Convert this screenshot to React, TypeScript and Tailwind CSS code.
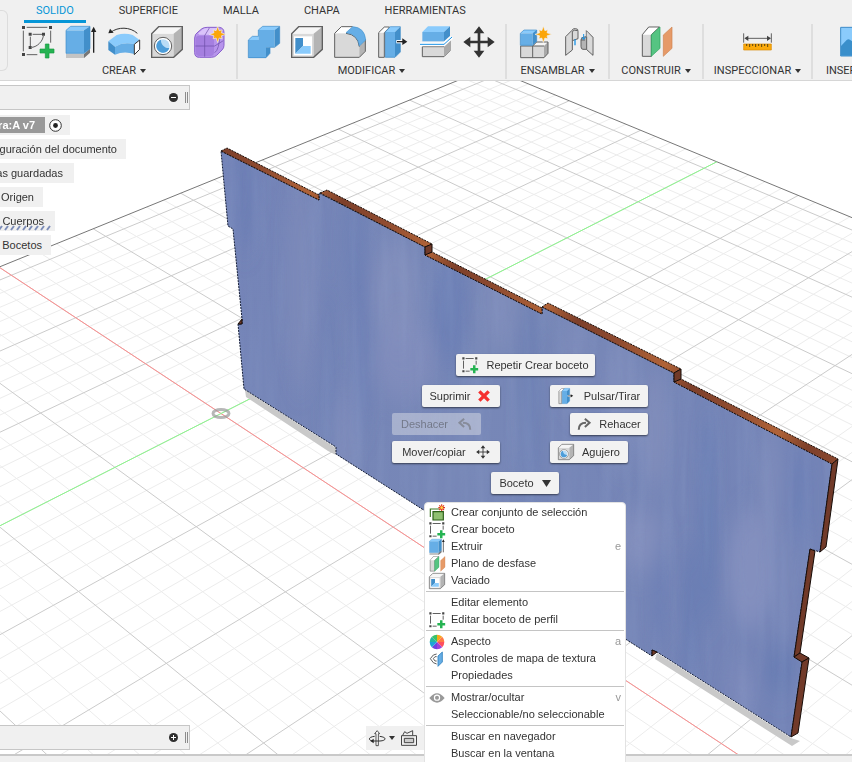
import type { ReactNode } from "react";
import clsx from "clsx";

type IconProps = { className?: string };

const BLUE = "#66aee6";
const BLUE_LIGHT = "#8acbfc";
const BLUE_DARK = "#428fca";
const STEEL = "#d9d9d9";
const STEEL_LIGHT = "#f6f6f6";
const STEEL_DARK = "#b4b4b4";
const EDGE = "#606060";

function Icon({ className = "size-8", children }: IconProps & { children: ReactNode }) {
  return (
    <svg viewBox="0 0 96 96" className={clsx("shrink-0 overflow-visible", className)} fill="none" aria-hidden="true">
      {children}
    </svg>
  );
}

/* ---------- toolbar icons, drawn on a 96 unit grid ---------- */

function Star({ x, y }: { x: number; y: number }) {
  const points = Array.from({ length: 16 }, (_, k) => {
    const r = k % 2 ? 12 : k % 4 ? 19 : 25;
    const a = (k * Math.PI) / 8;
    return `${x + r * Math.sin(a)},${y - r * Math.cos(a)}`;
  }).join(" ");
  return <polygon points={points} fill="#fba60a" stroke="#f0f0f0" strokeWidth="2" />;
}

function SketchIcon({ className }: IconProps) {
  return (
    <Icon className={className}>
      <path d="M14 4H76M4 14V76M86 14V50M14 86H46" stroke={EDGE} strokeWidth="3" />
      <path d="M0 0h9v9H0zM81 0h9v9h-9zM0 81h9v9H0z" fill="#444" />
      <path d="M25 32V60M32 25H60M64 30C62 46 46 62 30 64" stroke={EDGE} strokeWidth="3" />
      <path d="M20 20h9v9h-9zM60 20h9v9h-9zM20 60h9v9h-9z" fill="#444" />
      <path d="M70 54h11v15h15v12H81v15H70V81H54V69h16z" fill="#25b352" stroke="#159a40" strokeWidth="2" />
    </Icon>
  );
}

function SketchSmallIcon({ className }: IconProps) {
  return (
    <Icon className={className}>
      <path d="M22 9H70M9 22V70M85 22V46M22 85H46" stroke={EDGE} strokeWidth="6" />
      <path d="M2 2h13v13H2zM79 2h13v13H79zM2 79h13v13H2z" fill="#444" />
      <path d="M66 50h15v16h16v15H81v16H66V81H50V66h16z" fill="#25b352" />
    </Icon>
  );
}

function ExtrudeIcon({ className }: IconProps) {
  return (
    <Icon className={className}>
      <path d="M3 84H57L75 68V80L57 96H3z" fill="#c4c4c4" />
      <path d="M57 84L75 68V80L57 96z" fill="#777" />
      <path d="M3 13H57V82H3z" fill={BLUE} />
      <path d="M3 13L17 1H75L57 13z" fill={BLUE_LIGHT} />
      <path d="M57 13L75 1V68L57 82z" fill={BLUE_DARK} />
      <path d="M3 13L17 1H75V68L57 82H3z" stroke="#3c8bc8" strokeWidth="2" />
      <path d="M86 80V12" stroke="#222" strokeWidth="4" />
      <path d="M78 18L86 2L94 18z" fill="#222" />
    </Icon>
  );
}

function RevolveIcon() {
  return (
    <Icon>
      <path d="M8 19C30 2 66 2 88 22" stroke="#333" strokeWidth="3" />
      <path d="M1 22L6 8L17 20z" fill="#222" />
      <path d="M1 46L26 27Q50 20 74 27L95 42L79 55Q48 46 21 62z" fill={BLUE_LIGHT} />
      <path d="M1 46L21 62V86L1 72z" fill={BLUE_DARK} />
      <path d="M21 62Q48 46 79 55V84Q48 74 21 86z" fill={BLUE} />
      <path d="M79 55L95 42V70L79 86z" fill="#fff" stroke="#333" strokeWidth="3" />
    </Icon>
  );
}

function SteelBox() {
  return (
    <>
      <path d="M2 23H68V94H2z" fill={STEEL} />
      <path d="M2 23L23 2H94L68 23z" fill={STEEL_LIGHT} />
      <path d="M68 23L94 2V70L68 94z" fill={STEEL_DARK} />
      <path d="M2 23L23 2H94V70L68 94H2z" stroke={EDGE} strokeWidth="4" />
    </>
  );
}

function HoleIcon({ className }: IconProps) {
  return (
    <Icon className={className}>
      <SteelBox />
      <circle cx="36" cy="60" r="26" fill="#fff" stroke={EDGE} strokeWidth="3" />
      <circle cx="36" cy="60" r="20" fill="#b9dcf6" />
      <path d="M30 41C28 54 42 68 55 66A20 20 0 1 1 30 41z" fill="#4d9dd9" />
    </Icon>
  );
}

function FormIcon() {
  return (
    <Icon>
      <path d="M2 36Q2 24 12 18L24 8Q30 4 40 4H76Q90 6 90 20V58Q90 66 84 72L68 88Q62 94 52 94H16Q2 94 2 80z" fill="#b794ec" stroke="#8a62cc" strokeWidth="3" />
      <path d="M12 22L26 10Q32 6 42 6H70L62 22Q60 26 52 26H16z" fill="#d9c3fa" />
      <path d="M5 40Q5 29 16 29H50Q60 29 60 40V78Q60 90 50 90H16Q5 90 5 78z" fill="#a57fe0" />
      <path d="M32 29V92M4 60H62L88 44M60 36L84 14M62 80Q76 72 78 22M32 29L46 6" stroke="#6b4ba6" strokeWidth="2" />
      <Star x={71} y={25} />
    </Icon>
  );
}

function CombineIcon() {
  return (
    <Icon>
      <path d="M31 12H80V64H54V96H1V42H31z" fill={BLUE} />
      <path d="M31 12L44 1H95L80 12zM1 42L13 31H31V42z" fill={BLUE_LIGHT} />
      <path d="M80 12L95 1V52L80 64zM54 64H66V82L54 95z" fill={BLUE_DARK} />
      <path d="M31 12L44 1H95V52L80 64H66V82L54 95H1V42L13 31H31z" stroke="#3c8bc8" strokeWidth="2" />
    </Icon>
  );
}

function ShellIcon({ className }: IconProps) {
  return (
    <Icon className={className}>
      <SteelBox />
      <path d="M9 31H63V88H9z" fill="#fff" />
      <path d="M13 36H36V60L13 83z" fill={BLUE_DARK} />
      <path d="M36 60H59V83H13z" fill={BLUE_LIGHT} />
    </Icon>
  );
}

function FilletIcon() {
  return (
    <Icon>
      <path d="M2 22H36Q72 26 76 62V94H2z" fill={STEEL} />
      <path d="M2 22L22 2H56L36 22z" fill="#fff" />
      <path d="M76 60L94 40V76L76 94z" fill={STEEL_DARK} />
      <path d="M36 22Q72 26 76 62M2 22L22 2H56M94 40V76L76 94H2V22" stroke={EDGE} strokeWidth="3" />
      <path d="M36 20L56 2Q92 4 95 42L76 60Q72 24 36 20z" fill={BLUE} stroke="#4394d0" strokeWidth="2" />
    </Icon>
  );
}

function PressPullIcon({ className }: IconProps) {
  return (
    <Icon className={className}>
      <path d="M5 20L22 3H38L22 20V94H5z" fill={STEEL} stroke={EDGE} strokeWidth="3" />
      <path d="M7 20L23 5H34L20 20z" fill="#fff" />
      <path d="M25 18H54V94H25z" fill={BLUE} />
      <path d="M25 18L40 2H70L54 18z" fill={BLUE_LIGHT} />
      <path d="M54 18L70 2V78L54 94z" fill={BLUE_DARK} />
      <path d="M25 18L40 2H70V78L54 94H25z" stroke="#3c8bc8" strokeWidth="2" />
      <path d="M58 47H80" stroke="#fff" strokeWidth="10" />
      <path d="M60 47H82" stroke="#222" strokeWidth="4" />
      <path d="M76 37L91 47L76 57z" fill="#222" />
    </Icon>
  );
}

function SplitIcon() {
  return (
    <Icon>
      <path d="M7 62H72L90 44V74L72 92H7z" fill={STEEL} stroke={EDGE} strokeWidth="3" />
      <path d="M72 62L90 44V74L72 92z" fill="#aaa" />
      <path d="M7 18H72V46H7z" fill={BLUE} />
      <path d="M7 18L24 1H90L72 18z" fill={BLUE_LIGHT} />
      <path d="M72 18L90 1V30L72 46z" fill={BLUE_DARK} />
      <path d="M0 55H72L96 33" stroke="#fff" strokeWidth="11" />
      <path d="M0 55H72L96 33" stroke="#1b93e6" strokeWidth="3" />
    </Icon>
  );
}

function MoveIcon({ className, thin }: IconProps & { thin?: boolean }) {
  return (
    <Icon className={className}>
      <path d="M48 14V82M14 48H82" stroke="#333" strokeWidth={thin ? 6 : 8} />
      <path d="M48 1L64 22H32zM48 95L64 74H32zM1 48L22 32V64zM95 48L74 32V64z" fill="#333" />
    </Icon>
  );
}

function NewComponentIcon() {
  return (
    <Icon>
      <path d="M2 60H37V95H2zM38 60H72V95H38z" fill={STEEL} />
      <path d="M38 60L50 48H84L72 60z" fill={STEEL_LIGHT} />
      <path d="M72 60L84 48V82L72 95z" fill="#a8a8a8" />
      <path d="M2 60V95H72L84 82V48H50L38 60V95M2 60H72" stroke={EDGE} strokeWidth="3" />
      <path d="M1 22L12 12H52L46 22z" fill={BLUE_LIGHT} />
      <path d="M1 22H38V58H1z" fill={BLUE} />
      <path d="M38 22L50 12V46L38 58z" fill={BLUE_DARK} />
      <path d="M1 22L12 12H50V46L38 58H1z" stroke="#3c8bc8" strokeWidth="2" />
      <Star x={70} y={25} />
    </Icon>
  );
}

function JointIcon() {
  return (
    <Icon>
      <path d="M8 32L26 14Q30 6 38 8Q46 8 45 16V38L28 44V72L8 88z" fill={STEEL} stroke={EDGE} strokeWidth="3" />
      <path d="M28 44V16M28 16Q34 10 44 14" stroke={EDGE} strokeWidth="3" />
      <path d="M36 40V58" stroke="#1b93e6" strokeWidth="4" />
      <path d="M70 14L90 34V88L70 70H60Q54 70 54 62V42Q54 36 60 34L70 32z" fill={STEEL_DARK} stroke={EDGE} strokeWidth="3" />
      <path d="M71 16V68L88 84V35z" fill={STEEL} />
      <path d="M71 32V70M54 42H66" stroke={EDGE} strokeWidth="3" />
      <path d="M62 24V40M56 34L62 40L68 34" stroke="#1b93e6" strokeWidth="3" />
    </Icon>
  );
}

function PlaneIcon({ className }: IconProps) {
  return (
    <Icon className={className}>
      <path d="M7 26L26 3H58L34 26V91H7z" fill={STEEL} stroke={EDGE} strokeWidth="3" />
      <path d="M9 26L27 5H54L32 26z" fill="#fff" />
      <path d="M34 27L60 3V67L34 91z" fill="#55c482" stroke="#27a35a" strokeWidth="2" />
      <path d="M70 27L96 3V67L70 91z" fill="#e69a68" stroke="#cf8350" strokeWidth="2" />
    </Icon>
  );
}

function MeasureIcon() {
  return (
    <Icon>
      <path d="M5 22V50M88 22V50M12 37H82" stroke={EDGE} strokeWidth="3" />
      <path d="M7 37L19 29V45zM87 37L75 29V45z" fill="#444" />
      <path d="M5 54H88V72H5z" fill="#fbaa0c" stroke="#d98a00" strokeWidth="2" />
      <path d="M14 54v6M23 54v9M32 54v6M41 54v9M50 54v6M59 54v9M68 54v6M77 54v9" stroke="#5c4410" strokeWidth="3" />
    </Icon>
  );
}

function InsertImageIcon() {
  return (
    <Icon>
      <path d="M2 4H94V90H2z" fill={BLUE_LIGHT} stroke="#3c8bc8" strokeWidth="3" />
      <path d="M3 60L20 42Q26 36 34 44L60 70L94 50V89H3z" fill="#3a8fcb" />
    </Icon>
  );
}

/* ---------- menu icons ---------- */

function SelectionSetIcon({ className }: IconProps) {
  return (
    <Icon className={className}>
      <path d="M8 72V24H64" stroke="#3c7a22" strokeWidth="7" />
      <path d="M24 40H86V90H24z" fill="#8fbf70" stroke="#2c5f18" strokeWidth="7" />
      <path d="M76 -4V36M56 16H96M62 2L90 30M90 2L62 30" stroke="#e23a1c" strokeWidth="7" />
      <circle cx="76" cy="16" r="8" fill="#ffd84a" />
    </Icon>
  );
}

const WHEEL = ["#f7a81b", "#ff7a45", "#ff4f5e", "#a13fd8", "#6f42e0", "#1ea5d8", "#27b8a0", "#3cc267"];

function AppearanceIcon({ className }: IconProps) {
  return (
    <Icon className={className}>
      {WHEEL.map((fill, k) => {
        const a = (k * Math.PI) / 4;
        const b = ((k + 1) * Math.PI) / 4;
        const d = `M48 48L${48 + 44 * Math.sin(a)} ${48 - 44 * Math.cos(a)}A44 44 0 0 1 ${48 + 44 * Math.sin(b)} ${48 - 44 * Math.cos(b)}z`;
        return <path key={fill} d={d} fill={fill} />;
      })}
    </Icon>
  );
}

function TextureMapIcon({ className }: IconProps) {
  return (
    <Icon className={className}>
      <path d="M46 18L26 24L8 46L26 70L46 78M46 34H36L26 46L36 60H46" stroke={EDGE} strokeWidth="6" />
      <path d="M54 30L80 6V66L54 92z" fill={BLUE} stroke="#2f7fbd" strokeWidth="5" />
    </Icon>
  );
}

function EyeIcon({ className }: IconProps) {
  return (
    <Icon className={className}>
      <path d="M2 48Q48 -8 94 48Q48 104 2 48z" fill="#999" />
      <circle cx="48" cy="46" r="19" fill="#fff" />
      <circle cx="48" cy="46" r="12" fill="#999" />
    </Icon>
  );
}

function DeleteIcon({ className }: IconProps) {
  return (
    <Icon className={className}>
      <path d="M20 20L76 76M76 20L20 76" stroke="#f5302e" strokeWidth="20" />
    </Icon>
  );
}

function TurnIcon({ className, flip }: IconProps & { flip?: boolean }) {
  return (
    <Icon className={className}>
      <g transform={flip ? "translate(96 0) scale(-1 1)" : undefined}>
        <path d="M12 88C12 56 30 40 62 40" stroke="#666" strokeWidth="14" />
        <path d="M54 12L86 40L54 68" stroke="#666" strokeWidth="14" />
      </g>
    </Icon>
  );
}

function OrbitIcon() {
  return (
    <Icon className="size-4">
      <path d="M42 94V22H34L49 4L64 22H56V94z" fill="#fff" stroke="#333" strokeWidth="5" />
      <path d="M34 38C-6 42 -6 62 22 66M64 38C110 44 104 64 66 66H22" stroke="#333" strokeWidth="6" />
      <path d="M8 66L28 52V80z" fill="#222" />
    </Icon>
  );
}

function LookAtIcon() {
  return (
    <Icon className="size-4">
      <path d="M3 34H93V92H3z" stroke="#444" strokeWidth="6" />
      <path d="M20 50H76V76H20z" fill="#ccc" stroke="#444" strokeWidth="6" />
      <path d="M10 32L22 10L36 20L70 4V32" stroke="#444" strokeWidth="6" />
    </Icon>
  );
}

function Caret() {
  return (
    <svg viewBox="0 0 6 4" className="h-1 w-1.5 shrink-0" aria-hidden="true">
      <path d="M0 0H6L3 4z" fill="#333" />
    </svg>
  );
}

/* ---------- ribbon ---------- */

const TABS = ["SOLIDO", "SUPERFICIE", "MALLA", "CHAPA", "HERRAMIENTAS"];

const GROUPS = [
  {
    label: "CREAR",
    className: "w-[230px] pl-1",
    tools: [
      { name: "Crear boceto", icon: <SketchIcon /> },
      { name: "Extruir", icon: <ExtrudeIcon /> },
      { name: "Revolución", icon: <RevolveIcon /> },
      { name: "Agujero", icon: <HoleIcon /> },
      { name: "Crear forma", icon: <FormIcon /> },
    ],
  },
  {
    label: "MODIFICAR",
    className: "w-[269px]",
    tools: [
      { name: "Combinar", icon: <CombineIcon /> },
      { name: "Vaciado", icon: <ShellIcon /> },
      { name: "Empalme", icon: <FilletIcon /> },
      { name: "Pulsar/Tirar", icon: <PressPullIcon /> },
      { name: "Dividir cuerpo", icon: <SplitIcon /> },
      { name: "Mover/copiar", icon: <MoveIcon /> },
    ],
  },
  {
    label: "ENSAMBLAR",
    className: "w-[103px]",
    tools: [
      { name: "Nuevo componente", icon: <NewComponentIcon /> },
      { name: "Unión", icon: <JointIcon /> },
    ],
  },
  { label: "CONSTRUIR", className: "w-[94px]", tools: [{ name: "Plano de desfase", icon: <PlaneIcon /> }] },
  { label: "INSPECCIONAR", className: "w-[109px]", tools: [{ name: "Medir", icon: <MeasureIcon /> }] },
  { label: "INSERTAR", className: "w-[88px]", tools: [{ name: "Insertar imagen", icon: <InsertImageIcon /> }] },
];

function Ribbon() {
  return (
    <header className="flex h-[81px] shrink-0 overflow-hidden border-b border-[#d6d6d6] bg-[#f0f0f0] font-['Roboto','Liberation_Sans',sans-serif] text-[11px] text-[#333]">
      <div className="mt-[10px] h-[61px] w-2 shrink-0 rounded-r-md border border-l-0 border-[#dcdcdc]" />
      <div className="min-w-0 flex-1">
        <nav className="flex h-6 gap-[21px] pl-4">
          {TABS.map((tab, idx) => (
            <button
              key={tab}
              type="button"
              className={clsx(
                "h-[23px] border-b-[3px] px-3 pt-px leading-5",
                idx === 0 ? "border-[#0696d7] text-[#0696d7]" : "border-transparent"
              )}
            >
              {tab}
            </button>
          ))}
        </nav>
        <div className="flex">
          {GROUPS.map((group) => (
            <section
              key={group.label}
              className={clsx("flex shrink-0 flex-col items-center border-r-2 border-[#dedede] pt-0.5", group.className)}
            >
              <div className="flex">
                {group.tools.map((tool) => (
                  <button key={tool.name} type="button" aria-label={tool.name} className="flex w-[43px] justify-center">
                    {tool.icon}
                  </button>
                ))}
              </div>
              <button type="button" className="mt-[5px] flex h-4 items-center gap-1 leading-4">
                {group.label}
                <Caret />
              </button>
            </section>
          ))}
        </div>
      </div>
    </header>
  );
}

/* ---------- 3D view ---------- */

// Projects a point of the ground plane (in major grid cells) onto the view.
function project(i: number, j: number) {
  const w = 1 - 0.0425 * i + 0.0433 * j;
  return [(69.4 * i + 111 * j + 221) / w, (34.4 * i - 33.6 * j + 413.5) / w];
}

function segment(i1: number, j1: number, i2: number, j2: number) {
  const [x1, y1] = project(i1, j1);
  const [x2, y2] = project(i2, j2);
  return `M${x1.toFixed(1)} ${y1.toFixed(1)}L${x2.toFixed(1)} ${y2.toFixed(1)}`;
}

const I_MIN = -16;
const I_MAX = 45;
const J_MIN = -35;
const J_MAX = 31;

function gridLines(major: boolean) {
  let d = "";
  for (let i = I_MIN + 1; i <= I_MAX; i++) {
    if ((i % 5 === 0) === major) d += segment(i / 5, J_MIN / 5, i / 5, J_MAX / 5);
  }
  for (let j = J_MIN; j < J_MAX; j++) {
    if ((j % 5 === 0) === major) d += segment(I_MIN / 5, j / 5, I_MAX / 5, j / 5);
  }
  return d;
}

const FACE =
  "M221 151L319 200V193L425 247V255L542 314V307L674 373V382L832 464L820 552L810 549L794 657L802 662L791 737L657 652L652 650V656L336 454V447L244 389L238 324H242V319L233 229L228 226z";

const EDGES = [
  "M221 151L227 148L319 195V200z",
  "M320 193L327 190L432 244L425 247z",
  "M425 255L432 252L542 308V314z",
  "M542 307L548 303L681 369L674 373z",
  "M674 382L681 379L838 459L832 464z",
];

const SIDES = [
  "M425 247L432 244V252L425 255z",
  "M674 373L681 369V379L674 382z",
  "M832 464L838 459L826 547L820 552z",
  "M810 549L815 551L800 653L794 657z",
  "M794 657L800 653L809 658L802 662z",
  "M802 662L809 658L798 733L791 737z",
  "M652 650L657 652L652 656z",
  "M238 324L242 319V324z",
];

// x, y, half width, half height, fill, opacity
const STREAKS: [number, number, number, number, string, number][] = [
  [245, 190, 14, 60, "#6379b2", 0.4],
  [300, 280, 16, 110, "#8a93bf", 0.25],
  [330, 400, 7, 120, "#6076b0", 0.3],
  [355, 240, 12, 60, "#6a7db3", 0.4],
  [362, 350, 9, 90, "#5f77b2", 0.3],
  [395, 290, 24, 50, "#929ac4", 0.35],
  [405, 360, 30, 40, "#8e97c2", 0.4],
  [345, 440, 10, 50, "#8d96c1", 0.3],
  [450, 310, 18, 60, "#5f78b3", 0.4],
  [500, 300, 20, 50, "#8b94c0", 0.35],
  [530, 400, 12, 110, "#6178b2", 0.35],
  [575, 360, 16, 50, "#8a93bf", 0.35],
  [620, 400, 18, 70, "#8b94c0", 0.3],
  [655, 430, 14, 60, "#929ac4", 0.35],
  [640, 540, 26, 30, "#929ac4", 0.45],
  [708, 520, 8, 110, "#5a76b1", 0.45],
  [690, 610, 8, 70, "#5873b0", 0.4],
  [750, 570, 22, 60, "#979ec7", 0.45],
  [770, 480, 14, 60, "#8b94c0", 0.35],
  [785, 580, 12, 60, "#7f8bbb", 0.4],
  [780, 670, 16, 24, "#5a74b0", 0.45],
  [660, 590, 7, 60, "#657ab3", 0.4],
  [800, 500, 12, 50, "#6279b4", 0.35],
  [740, 690, 16, 30, "#8a93bf", 0.3],
];

function Scene() {
  return (
    <svg
      viewBox="0 81 852 673"
      preserveAspectRatio="xMidYMid slice"
      className="absolute inset-0 size-full"
      role="img"
      aria-label="Vista 3D del panel"
    >
      <defs>
        <linearGradient id="wood" gradientUnits="userSpaceOnUse" x1="221" y1="150" x2="338" y2="210" spreadMethod="repeat">
          <stop offset="0" stopColor="#7d3f2a" />
          <stop offset="0.35" stopColor="#8f4b30" />
          <stop offset="0.75" stopColor="#b06338" />
          <stop offset="1" stopColor="#7d3f2a" />
        </linearGradient>
        <linearGradient id="shade" x1="0" x2="1" y1="0" y2="0.3">
          <stop offset="0" stopColor="#7484b8" />
          <stop offset="0.5" stopColor="#7787b7" />
          <stop offset="1" stopColor="#7484b7" />
        </linearGradient>
        <filter id="soft" x="-50%" y="-50%" width="200%" height="200%">
          <feGaussianBlur stdDeviation="7 14" />
        </filter>
        <filter id="grain" x="0" y="0" width="100%" height="100%">
          <feTurbulence type="fractalNoise" baseFrequency="0.08 0.006" numOctaves="3" seed="4" />
          <feColorMatrix values="0 0 0 0 0.33  0 0 0 0 0.42  0 0 0 0 0.67  0 1.6 0 0 -0.6" />
        </filter>
        <clipPath id="face">
          <path d={FACE} />
        </clipPath>
      </defs>

      <rect x="0" y="81" width="852" height="673" fill="#fff" />
      <path d={gridLines(false)} stroke="#ececec" fill="none" />
      <path d={gridLines(true)} stroke="#cbcbcb" fill="none" />
      <path
        d={segment(I_MIN / 5, J_MIN / 5, I_MIN / 5, J_MAX / 5) + segment(I_MIN / 5, J_MAX / 5, I_MAX / 5, J_MAX / 5)}
        stroke="#777"
        fill="none"
      />
      <path d={segment(I_MIN / 5, 0, I_MAX / 5, 0)} stroke="#ff8f8f" fill="none" />
      <path d={segment(0, J_MIN / 5, 0, J_MAX / 5)} stroke="#8cfa8c" fill="none" />
      <ellipse cx="221" cy="413.5" rx="8" ry="4" fill="none" stroke="#999" strokeOpacity="0.7" strokeWidth="3" />

      <path d="M245 390L336 448V455L328 451L246 397zM657 653L791 738L800 741L792 746L655 659z" fill="#c9c9c9" />

      <path d={FACE} fill="url(#shade)" />
      <g clipPath="url(#face)">
        <g filter="url(#soft)">
          {STREAKS.map(([x, y, rx, ry, fill, opacity]) => (
            <ellipse key={`${x}-${y}`} cx={x} cy={y} rx={rx} ry={ry} fill={fill} opacity={opacity} />
          ))}
        </g>
        <rect x="220" y="140" width="620" height="600" filter="url(#grain)" opacity="0.2" />
      </g>
      <path d={FACE} fill="none" stroke="#111a33" strokeDasharray="2 1" />
      {EDGES.map((d) => (
        <path key={d} d={d} fill="url(#wood)" stroke="#150b07" strokeDasharray="2 1" strokeLinejoin="round" />
      ))}
      {SIDES.map((d) => (
        <path key={d} d={d} fill="#713a29" stroke="#150b07" strokeLinejoin="round" />
      ))}
    </svg>
  );
}

/* ---------- browser panel ---------- */

const NODES = [
  { label: "figuración del documento", className: "w-[126px] pr-[9px]" },
  { label: "as guardadas", className: "w-[74px] pr-[11px]" },
  { label: "Origen", className: "w-[43px] pr-[9px]" },
  { label: "Cuerpos", className: "w-[55px] pr-[11px]", hatched: true },
  { label: "Bocetos", className: "w-[51px] pr-[9px]" },
];

function PanelBar({ sign }: { sign: "plus" | "minus" }) {
  return (
    <div className="flex h-[25px] w-[190px] items-center justify-end gap-[7px] border border-l-0 border-[#c6c6c6] bg-[#f0f0f0] pr-px">
      <button type="button" aria-label={sign === "plus" ? "Expandir" : "Contraer"}>
        <svg viewBox="0 0 9 9" className="size-[9px]">
          <circle cx="4.5" cy="4.5" r="4.5" fill="#2f2f2f" />
          <path d={sign === "plus" ? "M2 4.5H7M4.5 2V7" : "M2 4.5H7"} stroke="#fff" />
        </svg>
      </button>
      <span className="h-[11px] w-[3px] border-x border-[#8c8c8c]" />
    </div>
  );
}

function BrowserPanel() {
  return (
    <aside className="relative flex flex-1 flex-col items-start pt-1">
      <PanelBar sign="minus" />
      <ul className="mt-[5px] flex flex-col items-start gap-1 leading-5">
        <li className="flex h-5 w-[70px] items-center gap-1 bg-[#f0f0f0]">
          <span className="flex h-4 w-[45px] justify-end bg-[#999] pr-[10px] leading-4 font-bold whitespace-nowrap text-white">
            ra:A v7
          </span>
          <label className="relative flex">
            <input type="radio" defaultChecked aria-label="Activar componente" className="peer absolute inset-0 opacity-0" />
            <svg viewBox="0 0 13 13" className="size-[13px]" aria-hidden="true">
              <circle cx="6.5" cy="6.5" r="5.8" fill="#fff" stroke="#333" />
              <circle cx="6.5" cy="6.5" r="2.4" fill="#222" />
            </svg>
          </label>
        </li>
        {NODES.map((node) => (
          <li key={node.label} className={clsx("relative flex h-5 justify-end bg-[#f0f0f0] whitespace-nowrap", node.className)}>
            {node.label}
            {node.hatched && (
              <svg className="absolute bottom-0 left-0 h-1.5 w-[51px]" aria-hidden="true">
                <path
                  d={Array.from({ length: 9 }, (_, k) => `M${k * 6 - 1} 5l3 -4`).join("")}
                  stroke="#7d8db8"
                  strokeWidth="2"
                />
              </svg>
            )}
          </li>
        ))}
      </ul>
      <div className="mt-auto mb-1">
        <PanelBar sign="plus" />
      </div>
    </aside>
  );
}

/* ---------- marking menu ---------- */

function MarkingButton({ className, disabled, children }: IconProps & { disabled?: boolean; children: ReactNode }) {
  return (
    <button
      type="button"
      disabled={disabled}
      className={clsx(
        "absolute flex h-[22px] items-center justify-center whitespace-nowrap rounded-xs",
        disabled ? "bg-[#f0f0f0]/40 text-[#333]/45" : "bg-[#f2f2f2] shadow-[0_1px_2px_rgba(0,0,0,0.55)]",
        className
      )}
    >
      {children}
    </button>
  );
}

function MarkingMenu() {
  return (
    <div>
      <MarkingButton className="top-[273px] left-[456px] w-[139px] gap-2">
        <SketchSmallIcon className="size-4" />
        Repetir Crear boceto
      </MarkingButton>
      <MarkingButton className="top-[304px] left-[422px] w-[78px] gap-1.5">
        Suprimir
        <DeleteIcon className="size-4" />
      </MarkingButton>
      <MarkingButton className="top-[304px] left-[550px] w-[98px] gap-2.5">
        <PressPullIcon className="size-4" />
        Pulsar/Tirar
      </MarkingButton>
      <MarkingButton className="top-[332px] left-[392px] w-[89px] gap-2.5" disabled>
        Deshacer
        <TurnIcon flip className="size-3.5 opacity-50" />
      </MarkingButton>
      <MarkingButton className="top-[332px] left-[570px] w-[78px] gap-2">
        <TurnIcon className="size-3.5" />
        Rehacer
      </MarkingButton>
      <MarkingButton className="top-[360px] left-[392px] w-[108px] gap-2.5">
        Mover/copiar
        <MoveIcon thin className="size-3.5" />
      </MarkingButton>
      <MarkingButton className="top-[360px] left-[550px] w-[78px] gap-2">
        <HoleIcon className="size-4" />
        Agujero
      </MarkingButton>
      <MarkingButton className="top-[391px] left-[491px] w-[68px] gap-2">
        Boceto
        <svg viewBox="0 0 9 7" className="h-[7px] w-[9px]" aria-hidden="true">
          <path d="M0 0H9L4.5 7z" fill="#333" />
        </svg>
      </MarkingButton>
    </div>
  );
}

type MenuEntry = { label: string; icon?: ReactNode; shortcut?: string };

const MENU: MenuEntry[][] = [
  [
    { label: "Crear conjunto de selección", icon: <SelectionSetIcon className="size-4" /> },
    { label: "Crear boceto", icon: <SketchSmallIcon className="size-4" /> },
    { label: "Extruir", icon: <ExtrudeIcon className="size-4" />, shortcut: "e" },
    { label: "Plano de desfase", icon: <PlaneIcon className="size-4" /> },
    { label: "Vaciado", icon: <ShellIcon className="size-4" /> },
  ],
  [{ label: "Editar elemento" }, { label: "Editar boceto de perfil", icon: <SketchSmallIcon className="size-4" /> }],
  [
    { label: "Aspecto", icon: <AppearanceIcon className="size-4" />, shortcut: "a" },
    { label: "Controles de mapa de textura", icon: <TextureMapIcon className="size-4" /> },
    { label: "Propiedades" },
  ],
  [
    { label: "Mostrar/ocultar", icon: <EyeIcon className="size-4" />, shortcut: "v" },
    { label: "Seleccionable/no seleccionable" },
  ],
  [{ label: "Buscar en navegador" }, { label: "Buscar en la ventana" }],
];

function ContextMenu() {
  return (
    <div
      role="menu"
      className="absolute top-[421px] left-[424px] z-10 w-[202px] rounded-sm border border-[#e2e2e2] bg-white pt-px pb-2"
    >
      {MENU.map((section, idx) => (
        <div key={section[0].label} className={clsx("mx-px px-[3px]", idx > 0 && "mt-0.5 border-t border-[#c4c4c4] pt-0.5")}>
          {section.map((item) => (
            <button key={item.label} type="button" role="menuitem" className="flex h-[17px] w-full items-center text-left">
              <span className="mr-1.5 flex w-4">{item.icon}</span>
              <span className="flex-1 whitespace-nowrap">{item.label}</span>
              {item.shortcut && <span className="text-[#999]">{item.shortcut}</span>}
            </button>
          ))}
        </div>
      ))}
    </div>
  );
}

export default function App() {
  return (
    <div className="flex h-screen flex-col overflow-hidden bg-white font-['Liberation_Sans',Arial,sans-serif] text-[11px] text-[#333]">
      <Ribbon />
      <main className="relative flex min-h-0 flex-1">
        <Scene />
        <BrowserPanel />
        <div className="absolute bottom-1 left-[366px] flex h-6 w-[120px] items-center gap-1.5 bg-[#f0f0f0] pl-[3px]">
          <button type="button" aria-label="Órbita" className="flex items-center gap-1">
            <OrbitIcon />
            <Caret />
          </button>
          <button type="button" aria-label="Mirar a">
            <LookAtIcon />
          </button>
        </div>
        <MarkingMenu />
        <ContextMenu />
      </main>
      <footer className="h-2 shrink-0 border-t-2 border-[#c9c9c9] bg-[#f0f0f0]" />
    </div>
  );
}
